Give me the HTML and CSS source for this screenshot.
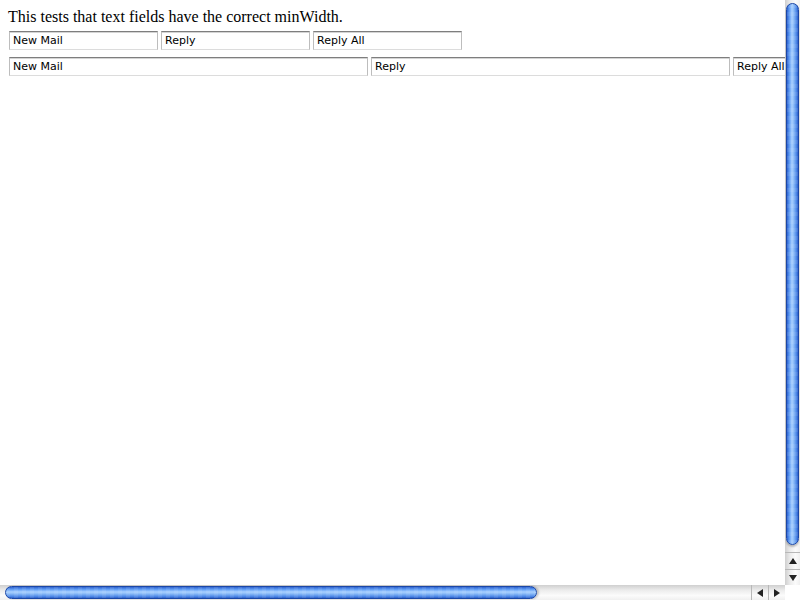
FILE: index.html
```html
<!DOCTYPE html>
<html>
<head>
<meta charset="utf-8">
<link rel="stylesheet" href="styles.css">
</head>
<body>
<div class="page">
  <div class="viewport">
    <div class="title">This tests that text fields have the correct minWidth.</div>
    <div class="row row-small">
      <input class="field" type="text" value="New Mail">
      <input class="field" type="text" value="Reply">
      <input class="field" type="text" value="Reply All">
    </div>
    <div class="row row-wide">
      <input class="field" type="text" value="New Mail">
      <input class="field" type="text" value="Reply">
      <input class="field" type="text" value="Reply All">
    </div>
  </div>
  <div class="vbar">
    <div class="vtrack"><div class="vthumb"></div></div>
    <div class="vbtn"><span class="tri-up"></span></div>
    <div class="vbtn"><span class="tri-down"></span></div>
  </div>
  <div class="hbar">
    <div class="htrack"><div class="hthumb"></div></div>
    <div class="hbtn"><span class="tri-left"></span></div>
    <div class="hbtn"><span class="tri-right"></span></div>
  </div>
  <div class="corner"></div>
</div>
</body>
</html>
```
FILE: styles.css
```css
html, body {
  margin: 0;
  padding: 0;
  overflow: hidden;
  background: #fff;
}

.page {
  display: grid;
  grid-template-columns: 785px 15px;
  grid-template-rows: 585px 15px;
  width: 800px;
  height: 600px;
}

.viewport {
  overflow: hidden;
  padding: 8px;
  box-sizing: border-box;
  min-width: 0;
}

.title {
  font-family: "Liberation Serif", serif;
  font-size: 16px;
  line-height: 18px;
  color: #000;
  white-space: nowrap;
}

.row {
  display: flex;
  gap: 3px;
  padding-left: 1px;
}

.row-small {
  margin-top: 5px;
}

.row-wide {
  margin-top: 7px;
  width: 1200px;
}

.field {
  box-sizing: border-box;
  height: 19px;
  margin: 0;
  padding: 0 0 0 3px;
  font-family: "DejaVu Sans", sans-serif;
  font-size: 11px;
  color: #000;
  background: #fff;
  border-style: solid;
  border-width: 1px;
  border-color: #7e7e7e #bdbdbd #dcdcdc #bdbdbd;
  box-shadow: inset 0 1px 0 #d4d4d4;
  border-radius: 0;
  outline: none;
  flex: none;
}

.row-small .field {
  width: 149px;
}

.row-wide .field {
  width: 359px;
}

/* Vertical scrollbar */
.vbar {
  display: flex;
  flex-direction: column;
  background: linear-gradient(to right, #cfcfcf, #ececec 35%, #fbfbfb 70%, #f0f0f0);
}

.vtrack {
  flex: 1;
  padding: 3px 1px 7px 1px;
  display: flex;
  flex-direction: column;
}

.vthumb {
  flex: 1;
  border-radius: 7px;
  border: 1px solid #1b47a6;
  background:
    repeating-linear-gradient(to bottom, rgba(255,255,255,0.08) 0 4px, rgba(0,0,0,0) 4px 8px),
    linear-gradient(to right, #2e62cf 0%, #5a98f2 20%, #a9d0ff 45%, #8cbcf8 60%, #4f8ae8 85%, #2c5fc8 100%);
  box-shadow: 0 2px 2px rgba(0,0,0,0.25);
}

.vbtn {
  height: 16px;
  border-top: 1px solid #b8b8b8;
  display: flex;
  align-items: center;
  justify-content: center;
}

.vbtn:last-child {
  height: 15px;
}

/* Horizontal scrollbar */
.hbar {
  display: flex;
  background: linear-gradient(to bottom, #cfcfcf, #ececec 35%, #fbfbfb 70%, #f0f0f0);
}

.htrack {
  flex: 1;
  padding: 1px 7px 1px 5px;
  display: flex;
}

.hthumb {
  width: 532px;
  border-radius: 7px;
  border: 1px solid #1b47a6;
  box-sizing: border-box;
  background:
    repeating-linear-gradient(to right, rgba(255,255,255,0.08) 0 4px, rgba(0,0,0,0) 4px 8px),
    linear-gradient(to bottom, #2e62cf 0%, #5a98f2 20%, #a9d0ff 45%, #8cbcf8 60%, #4f8ae8 85%, #2c5fc8 100%);
  box-shadow: 2px 0 2px rgba(0,0,0,0.2);
}

.hbtn {
  width: 17px;
  border-left: 1px solid #b8b8b8;
  display: flex;
  align-items: center;
  justify-content: center;
  box-sizing: border-box;
}

.corner {
  background: #fff;
}

.tri-up, .tri-down, .tri-left, .tri-right {
  width: 0;
  height: 0;
  display: block;
}

.tri-up {
  border-left: 4px solid transparent;
  border-right: 4px solid transparent;
  border-bottom: 6px solid #222;
}

.tri-down {
  border-left: 4px solid transparent;
  border-right: 4px solid transparent;
  border-top: 6px solid #222;
}

.tri-left {
  border-top: 4px solid transparent;
  border-bottom: 4px solid transparent;
  border-right: 6px solid #222;
}

.tri-right {
  border-top: 4px solid transparent;
  border-bottom: 4px solid transparent;
  border-left: 6px solid #222;
}
```
